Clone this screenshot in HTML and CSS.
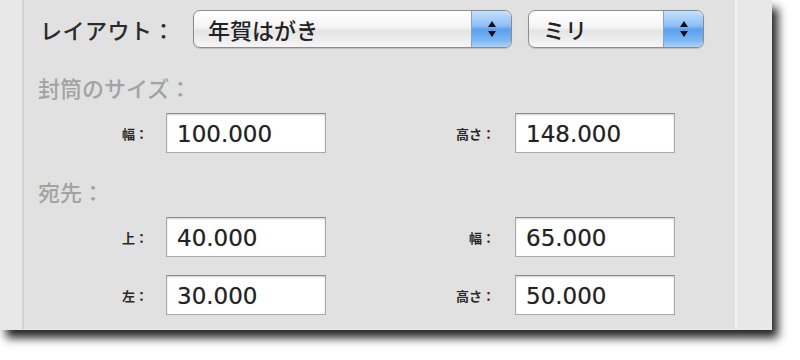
FILE: index.html
```html
<!DOCTYPE html>
<html lang="ja">
<head>
  <meta charset="UTF-8">
  <title>封筒のレイアウト</title>
  <link rel="stylesheet" href="styles.css">
</head>
<body>

<div class="window">
  <div class="panel">

    <div class="layout-row">
      <span class="layout-label">レイアウト：</span>
      <div class="popup popup-wide">
        <span class="popup-text">年賀はがき</span>
        <span class="popup-arrows"><i class="up"></i><i class="down"></i></span>
      </div>
      <div class="popup popup-unit">
        <span class="popup-text">ミリ</span>
        <span class="popup-arrows"><i class="up"></i><i class="down"></i></span>
      </div>
    </div>

    <div class="section-title first">封筒のサイズ：</div>
    <div class="fields">
      <label class="field-label">幅：</label>
      <div class="field">100.000</div>
      <label class="field-label right">高さ：</label>
      <div class="field">148.000</div>
    </div>

    <div class="section-title">宛先：</div>
    <div class="fields">
      <label class="field-label">上：</label>
      <div class="field">40.000</div>
      <label class="field-label right">幅：</label>
      <div class="field">65.000</div>

      <label class="field-label">左：</label>
      <div class="field">30.000</div>
      <label class="field-label right">高さ：</label>
      <div class="field">50.000</div>
    </div>

  </div>
</div>

</body>
</html>
```

FILE: styles.css
```css
body {
  margin: 0;
  padding-bottom: 30px;
  background-color: #ffffff;
  font-family: "Noto Sans CJK JP", "DejaVu Sans", sans-serif;
}
.window {
  width: 772px;
  height: 330px;
  display: flex;
  background-color: #e8e8e8;
  box-shadow: 6px 8px 9px rgba(0, 0, 0, 0.85);
}
.panel {
  box-sizing: border-box;
  margin-left: 22px;
  width: 715px;
  border-left: 2px solid #d2d2d2;
  border-right: 2px solid #f2f2f2;
  border-bottom: 1px solid #ececec;
  background-color: #e1e1e1;
  padding: 10px 0 0 16px;
}
.layout-row {
  display: flex;
  align-items: center;
  height: 38px;
}
.layout-label {
  font-size: 22px;
  font-weight: 500;
  color: #2b2b2b;
  width: 153px;
  letter-spacing: 0.5px;
}
.popup {
  position: relative;
  box-sizing: border-box;
  height: 38px;
  border: 1px solid #8c8c8c;
  border-radius: 7px;
  background: linear-gradient(#ffffff 0%, #f4f4f4 45%, #e4e4e4 55%, #f6f6f6 100%);
  display: flex;
  align-items: center;
  overflow: hidden;
  box-shadow: 0 1px 1px rgba(0, 0, 0, 0.15);
}
.popup-wide {
  width: 319px;
}
.popup-unit {
  width: 176px;
  margin-left: 16px;
}
.popup-text {
  flex: 1;
  padding-left: 14px;
  font-size: 22px;
  font-weight: 500;
  color: #222;
}
.popup-arrows {
  width: 39px;
  align-self: stretch;
  display: flex;
  flex-direction: column;
  align-items: center;
  justify-content: center;
  gap: 4px;
  background: linear-gradient(#c4e0fc 0%, #8ec0f6 40%, #5d9feb 52%, #7bb6f5 80%, #a8d2fc 100%);
  border-left: 1px solid #7aa6d6;
}
.popup-arrows i {
  width: 0;
  height: 0;
  border-left: 4px solid transparent;
  border-right: 4px solid transparent;
}
.popup-arrows .up {
  border-bottom: 6px solid #111;
}
.popup-arrows .down {
  border-top: 6px solid #111;
}
.section-title {
  font-size: 22px;
  font-weight: 500;
  line-height: 26px;
  color: #a3a3a3;
  margin: 25px 0 13px -2px;
}
.section-title.first {
  margin-top: 26px;
}
.fields {
  display: grid;
  grid-template-columns: 126px 160px 189px 160px;
  row-gap: 18px;
  align-items: center;
}
.field-label {
  text-align: right;
  padding-right: 18px;
  font-size: 13px;
  font-weight: bold;
  color: #2a2a2a;
}
.field-label.right {
  padding-right: 20px;
}
.field {
  box-sizing: border-box;
  height: 40px;
  background-color: #ffffff;
  border: 1px solid #a9a9a9;
  border-top-color: #8a8a8a;
  box-shadow: inset 0 1px 2px rgba(0, 0, 0, 0.2);
  padding: 4px 0 0 10px;
  font-family: "DejaVu Sans", sans-serif;
  font-size: 23px;
  line-height: 32px;
  color: #222;
  text-shadow: 0 0 1px rgba(0, 0, 0, 0.35);
}
```
